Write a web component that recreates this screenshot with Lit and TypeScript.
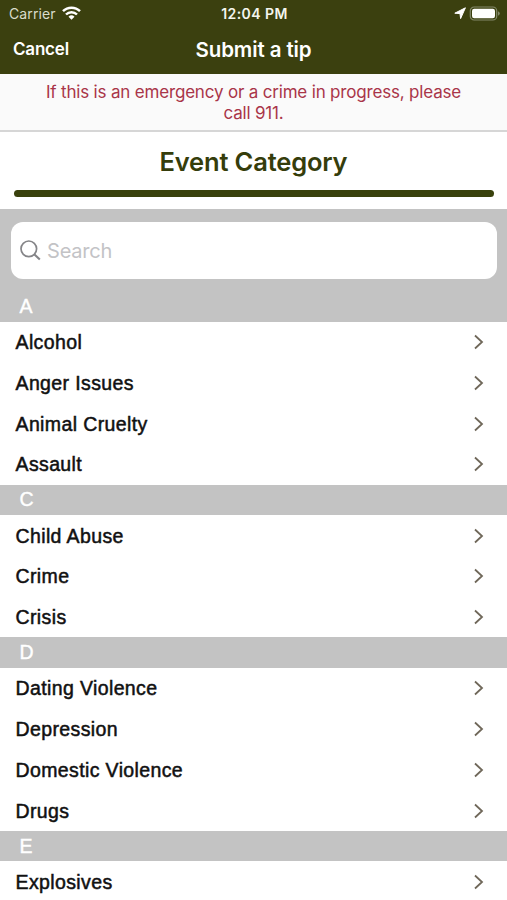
import { LitElement, html, css } from "lit";
import { customElement } from "lit/decorators.js";

interface Section {
  letter: string;
  items: string[];
}

const SECTIONS: Section[] = [
  { letter: "A", items: ["Alcohol", "Anger Issues", "Animal Cruelty", "Assault"] },
  { letter: "C", items: ["Child Abuse", "Crime", "Crisis"] },
  { letter: "D", items: ["Dating Violence", "Depression", "Domestic Violence", "Drugs"] },
  { letter: "E", items: ["Explosives"] },
];

@customElement("status-bar")
class StatusBar extends LitElement {
  static styles = css`
    :host {
      display: grid;
      grid-template-columns: 1fr auto 1fr;
      align-items: center;
      height: 28px;
      padding: 0 7px 0 9px;
      color: #f4f5ee;
      font-size: 14px;
      line-height: 18px;
    }
    .left,
    .right {
      display: flex;
      align-items: center;
    }
    .left {
      gap: 6px;
      color: #d9dccb;
      letter-spacing: 0.1px;
    }
    .right {
      justify-content: flex-end;
      gap: 3.5px;
    }
    .time {
      font-weight: 600;
      letter-spacing: 0.45px;
    }
    svg {
      display: block;
    }
    .wifi {
      margin-top: -2px;
    }
    .arrow {
      margin-top: -1px;
    }
    .battery {
      margin-top: -2px;
    }
  `;

  render() {
    return html`
      <div class="left">
        <span>Carrier</span>
        <svg class="wifi" width="19" height="14" viewBox="0 0 19 14" fill="none" stroke="#fff" stroke-width="2.5">
          <path d="M1 5.2a12 12 0 0 1 17 0" />
          <path d="M4 8.5a7.7 7.7 0 0 1 11 0" />
          <path d="M9.5 13.8 6.5 10.8a4.3 4.3 0 0 1 6 0Z" fill="#fff" stroke="none" />
        </svg>
      </div>
      <span class="time">12:04 PM</span>
      <div class="right">
        <svg class="arrow" width="12" height="13" viewBox="0 0 12 13" fill="#fff">
          <path d="M11.4.8 6.6 11.6 6 6.6.8 6.2Z" stroke="#fff" stroke-width="1" stroke-linejoin="round" />
        </svg>
        <svg class="battery" width="31" height="15" viewBox="0 0 31 15">
          <rect x="1.3" y="1" width="26.4" height="13" rx="3.8" fill="none" stroke="#83886a" stroke-width="1.2" />
          <rect x="3" y="2.7" width="23" height="9.6" rx="2.2" fill="#fff" />
          <path d="M29 5.2q1.8.7 1.8 2.3T29 9.8Z" fill="#83886a" />
        </svg>
      </div>
    `;
  }
}

@customElement("category-row")
class CategoryRow extends LitElement {
  static styles = css`
    :host {
      display: flex;
      align-items: center;
      justify-content: space-between;
      height: 40.75px;
      padding: 0 22px 0 15.5px;
      box-sizing: border-box;
      color: #111;
      font: 19.5px/24px "Liberation Sans", Arial, sans-serif;
      letter-spacing: 0.38px;
      -webkit-text-stroke: 0.5px #111;
    }
    svg {
      display: block;
    }
  `;

  render() {
    return html`
      <slot></slot>
      <svg width="12" height="16" viewBox="0 0 12 16" fill="none" stroke="#6f6759" stroke-width="1.8">
        <path d="M2 1.5 9 8 2 14.5" />
      </svg>
    `;
  }
}

@customElement("app-root")
class AppRoot extends LitElement {
  static styles = css`
    :host {
      display: block;
      height: 900px;
      overflow: hidden;
      background: #fff;
      font-family: Inter, "Liberation Sans", sans-serif;
    }
    .top {
      height: 74px;
      background: #3b400f;
    }
    .nav {
      display: grid;
      grid-template-columns: 1fr auto 1fr;
      align-items: center;
      height: 42px;
      padding: 0 13px;
      color: #fff;
    }
    .cancel {
      font-size: 17px;
      font-weight: 600;
      letter-spacing: -0.2px;
    }
    .title {
      font-size: 20.5px;
      font-weight: 600;
      letter-spacing: -0.1px;
    }
    .notice {
      box-sizing: border-box;
      height: 58px;
      padding: 8px 40px 0;
      background: #fafafa;
      border-bottom: 2px solid #d6d6d6;
      color: #a93549;
      font-size: 17px;
      line-height: 20.5px;
      letter-spacing: -0.18px;
      text-align: center;
    }
    .heading {
      box-sizing: border-box;
      height: 77.4px;
      padding: 14px 13.5px 0;
    }
    h1 {
      margin: 0 0 12px;
      color: #353d0b;
      font-size: 25.5px;
      font-weight: 600;
      line-height: 32px;
      text-align: center;
      letter-spacing: -0.17px;
    }
    .rule {
      height: 7px;
      border-radius: 4px;
      background: #39410c;
    }
    .search {
      height: 69.5px;
      padding: 12.3px 10.5px 0;
      background: #c3c3c3;
    }
    .field {
      display: flex;
      align-items: center;
      gap: 6.5px;
      height: 57.2px;
      padding-left: 9px;
      border-radius: 12px;
      background: #fff;
      color: #c3c3c6;
      font-size: 20px;
      letter-spacing: -0.2px;
    }
    .field span {
      padding-top: 1px;
    }
    .letter {
      display: flex;
      align-items: center;
      height: 30.5px;
      padding: 0 0 1px 19.5px;
      box-sizing: border-box;
      background: #c3c3c3;
      color: #fff;
      font: 19.5px/24px "Liberation Sans", Arial, sans-serif;
      -webkit-text-stroke: 0.4px #fff;
    }
  `;

  render() {
    return html`
      <header class="top">
        <status-bar></status-bar>
        <div class="nav">
          <span class="cancel">Cancel</span>
          <span class="title">Submit a tip</span>
        </div>
      </header>
      <div class="notice">If this is an emergency or a crime in progress, please<br />call 911.</div>
      <div class="heading">
        <h1>Event Category</h1>
        <div class="rule"></div>
      </div>
      <div class="search">
        <div class="field">
          <svg width="21" height="21" viewBox="0 0 21 21" fill="none" stroke="#858588" stroke-width="1.7">
            <circle cx="8.8" cy="8.8" r="7.8" />
            <path d="m14.2 14.2 5.6 5.4" stroke-width="2.1" />
          </svg>
          <span>Search</span>
        </div>
      </div>
      <div class="list">
        ${SECTIONS.map(
          (s) => html`
            <div class="letter">${s.letter}</div>
            ${s.items.map((item) => html`<category-row>${item}</category-row>`)}
          `,
        )}
      </div>
    `;
  }
}
